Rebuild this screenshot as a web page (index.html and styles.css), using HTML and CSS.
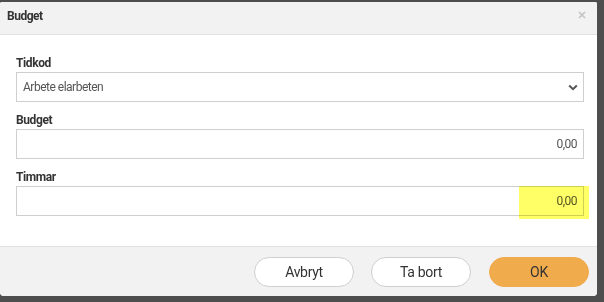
FILE: index.html
```html
<!DOCTYPE html>
<html>
<head>
<meta charset="utf-8">
<title>Budget</title>
<link rel="stylesheet" href="styles.css">
</head>
<body>
<div class="modal">
    <div class="modal-header">
        <h4 class="modal-title">Budget</h4>
        <span class="close">
            <svg width="8" height="8" viewBox="0 0 8 8"><path d="M1 1L7 7M7 1L1 7" stroke="#c4c4c4" stroke-width="1.6" fill="none"/></svg>
        </span>
    </div>
    <div class="modal-body">
        <div class="field">
            <label>Tidkod</label>
            <div class="input select">
                <span>Arbete elarbeten</span>
                <svg width="10" height="7" viewBox="0 0 10 7"><path d="M1.2 1.5L5 5.2L8.8 1.5" stroke="#555" stroke-width="2" fill="none"/></svg>
            </div>
        </div>
        <div class="field">
            <label>Budget</label>
            <div class="input number">0,00</div>
        </div>
        <div class="field">
            <label>Timmar</label>
            <div class="input number">0,00</div>
            <div class="highlight"></div>
        </div>
    </div>
    <div class="modal-footer">
        <button class="btn">Avbryt</button>
        <button class="btn">Ta bort</button>
        <button class="btn btn-ok">OK</button>
    </div>
</div>
</body>
</html>
```

FILE: styles.css
```css
* {
    box-sizing: border-box;
}

body {
    margin: 0;
    background: #4e4e4e;
    font-family: Roboto, "Liberation Sans", sans-serif;
    color: #333;
}

.modal {
    width: 597px;
    margin-top: 2px;
    background: #fff;
    border-radius: 2px 2px 4px 4px;
    overflow: hidden;
}

.modal-header {
    height: 33px;
    background: #f2f2f2;
    border-bottom: 1px solid #e2e2e2;
    padding: 0 7px 0 7px;
    display: flex;
    align-items: center;
    justify-content: space-between;
}

.modal-title {
    margin: 0 0 4px 0;
    font-size: 12px;
    font-weight: bold;
    letter-spacing: -0.5px;
    color: #333;
}

.close {
    display: flex;
    margin-right: 4px;
    margin-top: -7px;
}

.modal-body {
    padding: 21px 13px 30px 16px;
}

.field {
    position: relative;
    margin-bottom: 11px;
}

.field:last-child {
    margin-bottom: 0;
}

.field label {
    display: block;
    font-size: 12px;
    line-height: 15px;
    font-weight: bold;
    letter-spacing: -0.4px;
    color: #333;
    margin-bottom: 1px;
}

.input {
    height: 30px;
    border: 1px solid #cfcfcf;
    font-size: 12px;
    color: #555;
    letter-spacing: -0.5px;
    display: flex;
    align-items: center;
    padding: 0 6px;
}

.select {
    justify-content: space-between;
    padding-right: 5px;
}

.number {
    justify-content: flex-end;
}

.highlight {
    position: absolute;
    left: 503px;
    bottom: -3px;
    width: 70px;
    height: 33px;
    background: #ffff66;
    mix-blend-mode: multiply;
}

.modal-footer {
    height: 50px;
    background: #f2f2f2;
    border-top: 1px solid #e2e2e2;
    display: flex;
    justify-content: flex-end;
    align-items: flex-start;
    padding: 10px 8px 0 0;
    gap: 17px;
}

.btn {
    width: 100px;
    height: 30px;
    border: 1px solid #cfcfcf;
    border-radius: 15px;
    background: #fff;
    font-family: Roboto, "Liberation Sans", sans-serif;
    font-size: 14px;
    letter-spacing: -0.3px;
    color: #333;
    padding: 0;
}

.btn-ok {
    background: #f0ab4d;
    border-color: #f0ab4d;
    margin-left: 1px;
}
```
